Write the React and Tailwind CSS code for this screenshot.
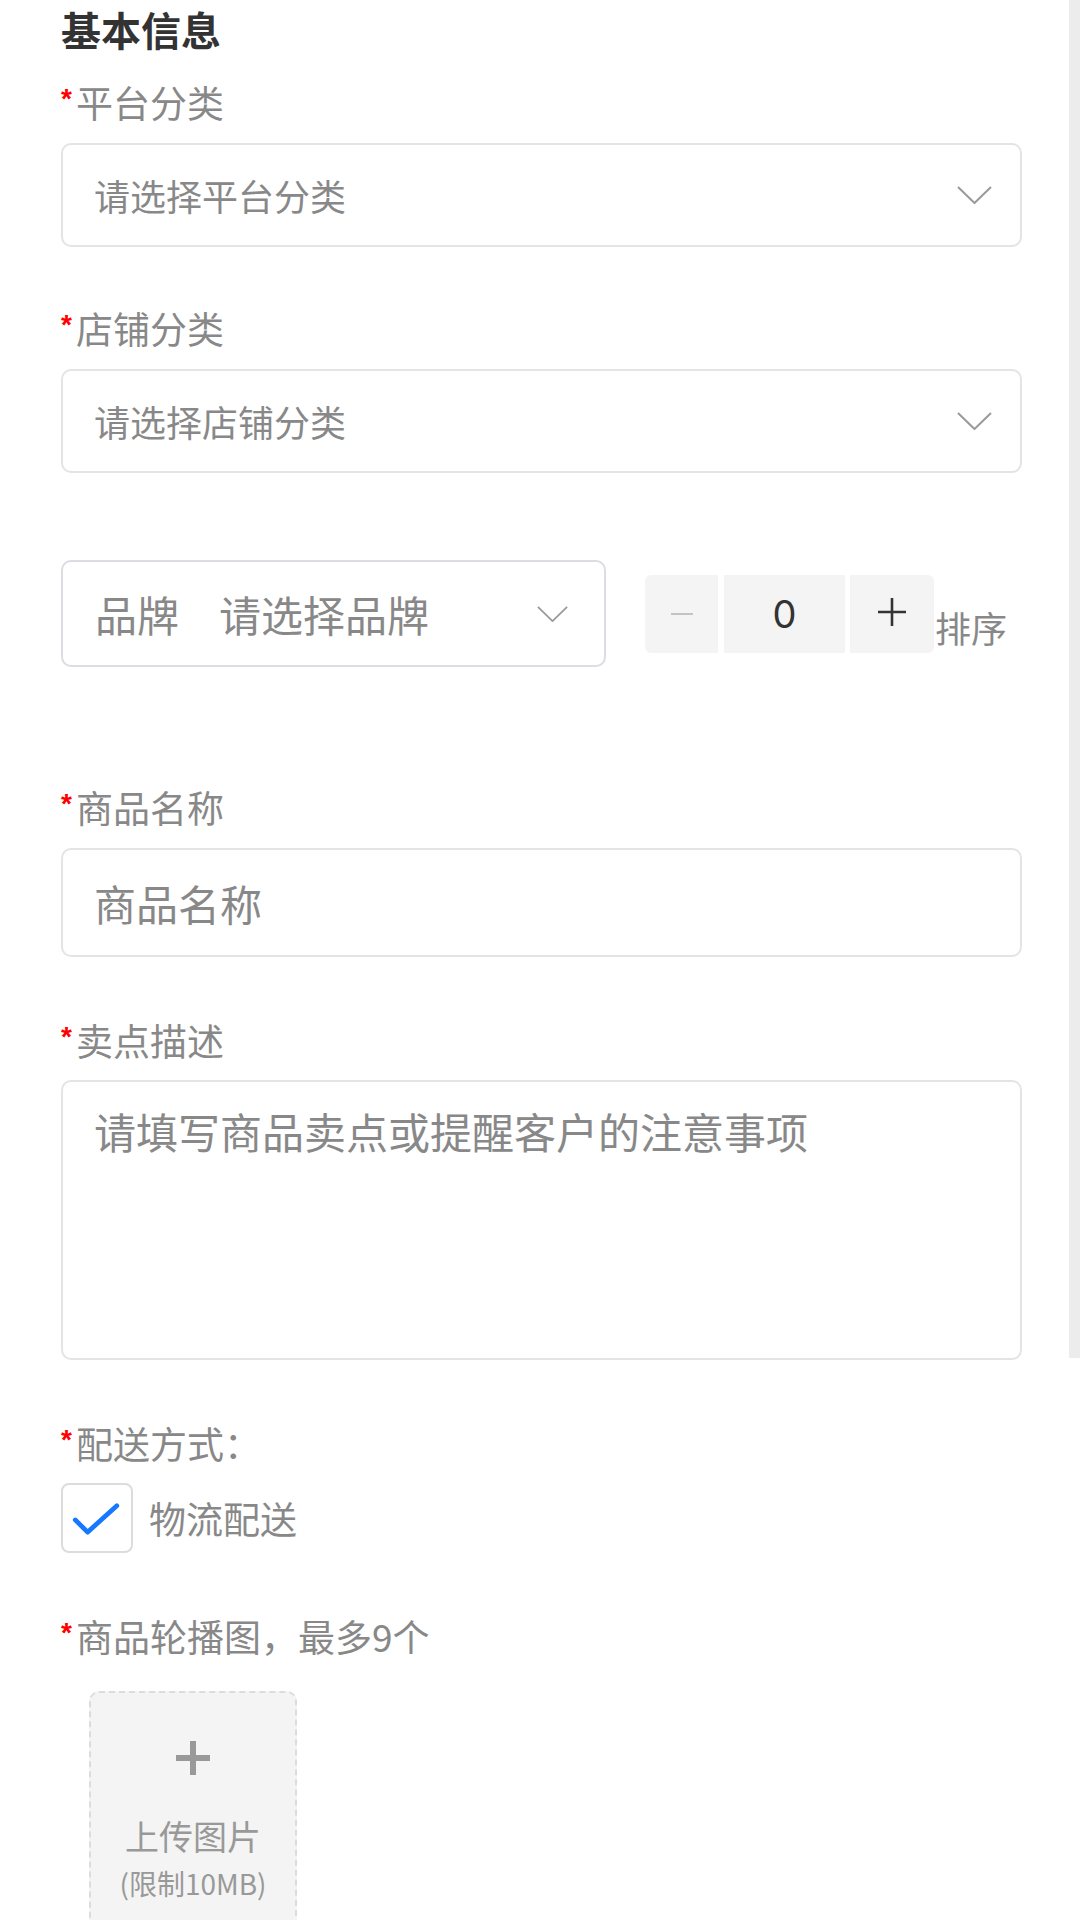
import React from 'react'

const FONT = "font-['Noto_Sans_CJK_SC','Noto_Sans',sans-serif]"

function Chevron({ className = '' }) {
  return (
    <svg viewBox="0 0 35 18" className={className} fill="none">
      <polyline points="1,1 17.5,17 34,1" stroke="#9a9a9a" strokeWidth="2" strokeLinejoin="round" />
    </svg>
  )
}

function Label({ children, className = '' }) {
  return (
    <div className={`flex h-[44px] items-start text-[37px] leading-[44px] text-[#888] ${className}`}>
      <span className="mt-[4px] mr-[4px] font-['Liberation_Sans',sans-serif] text-[28px] font-bold leading-[30px] text-[#ff0000]">*</span>
      <span>{children}</span>
    </div>
  )
}

function Select({ placeholder }) {
  return (
    <div className="mt-[19px] flex h-[104px] items-center justify-between rounded-[10px] border-2 border-[#e4e4e4] pl-[31px] pr-[28px]">
      <span className="text-[36px] leading-none text-[#888]">{placeholder}</span>
      <Chevron className="h-[18px] w-[35px]" />
    </div>
  )
}

function Stepper() {
  return (
    <div className="ml-[39px] flex h-[78px] items-stretch">
      <div className="flex w-[73px] items-center justify-center rounded-l-[6px] bg-[#f4f4f4]">
        <div className="h-[2px] w-[22px] bg-[#c4c4c4]" />
      </div>
      <div className="ml-[6px] flex w-[121px] items-center justify-center bg-[#f4f4f4] font-['Inter',sans-serif] text-[38px] leading-none text-[#333]">
        0
      </div>
      <div className="ml-[5px] flex w-[84px] items-center justify-center rounded-r-[6px] bg-[#f4f4f4]">
        <svg viewBox="0 0 28 28" className="-mt-[4px] h-[28px] w-[28px]">
          <path d="M14 0v28M0 14h28" stroke="#333" strokeWidth="2.6" />
        </svg>
      </div>
    </div>
  )
}

export default function App() {
  return (
    <div className={`flex w-[1080px] bg-white ${FONT}`}>
      <div className="flex-1 pl-[61px] pr-[47px]">
        <div className="text-[40px] font-bold leading-[58px] text-[#333]">基本信息</div>

        <Label className="mt-[22px]">平台分类</Label>
        <Select placeholder="请选择平台分类" />

        <Label className="mt-[59px]">店铺分类</Label>
        <Select placeholder="请选择店铺分类" />

        <div className="mt-[87px] flex items-center">
          <div className="flex h-[107px] w-[545px] items-center rounded-[10px] border-2 border-[#dcdde2] pl-[32px] pr-[36px]">
            <span className="text-[42px] leading-none text-[#888]">品牌</span>
            <span className="ml-[40px] flex-1 text-[42px] leading-none text-[#888]">请选择品牌</span>
            <Chevron className="h-[16px] w-[31px]" />
          </div>
          <Stepper />
          <span className="mt-[26px] ml-[1px] text-[36px] leading-[44px] text-[#888]">排序</span>
        </div>

        <Label className="mt-[118px]">商品名称</Label>
        <div className="mt-[19px] flex h-[109px] items-center rounded-[10px] border-2 border-[#e4e4e4] pl-[31px]">
          <span className="text-[42px] leading-none text-[#888]">商品名称</span>
        </div>

        <Label className="mt-[61px]">卖点描述</Label>
        <div className="mt-[18px] h-[280px] rounded-[10px] border-2 border-[#e4e4e4] pl-[31px] pt-[24px]">
          <div className="text-[42px] leading-[50px] text-[#888]">请填写商品卖点或提醒客户的注意事项</div>
        </div>

        <Label className="mt-[61px]">配送方式：</Label>
        <div className="mt-[18px] flex items-center">
          <div className="flex h-[70px] w-[72px] items-center justify-center rounded-[8px] border-2 border-[#dcdcdc]">
            <svg viewBox="0 0 72 70" className="h-[70px] w-[72px]" fill="none">
              <polyline points="13,37 26,50 57,22" stroke="#1677ff" strokeWidth="5" strokeLinecap="round" strokeLinejoin="round" />
            </svg>
          </div>
          <span className="ml-[16px] text-[37px] leading-[44px] text-[#888]">物流配送</span>
        </div>

        <Label className="mt-[61px]">商品轮播图，最多9个</Label>
        <div className="mt-[33px] ml-[28px] flex h-[240px] w-[208px] flex-col items-center rounded-[10px] border-2 border-dashed border-[#dcdcdc] bg-[#f4f4f4] pt-[48px]">
          <svg viewBox="0 0 34 34" className="h-[34px] w-[34px]">
            <path d="M17 0v34M0 17h34" stroke="#999" strokeWidth="6" />
          </svg>
          <div className="mt-[41px] text-[34px] leading-[40px] text-[#999]">上传图片</div>
          <div className="mt-[10px] text-[28px] leading-[34px] text-[#999]">(限制10MB)</div>
        </div>
      </div>
      <div className="w-[11px]">
        <div className="h-[1358px] bg-[#ececec]" />
      </div>
    </div>
  )
}
